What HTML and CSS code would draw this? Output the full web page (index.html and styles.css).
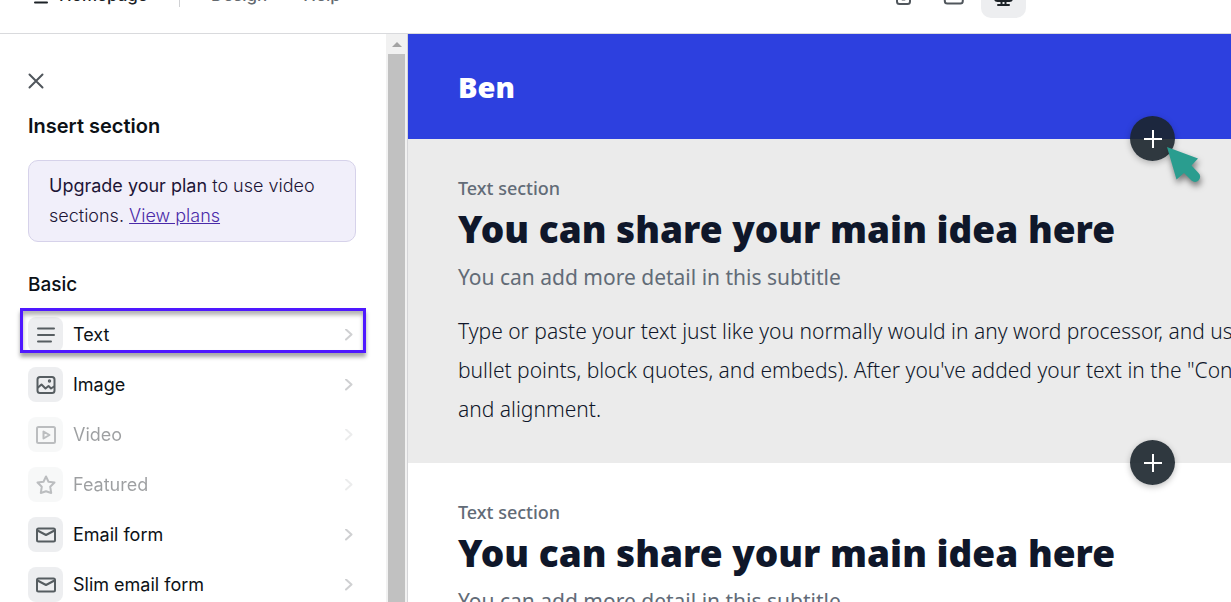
FILE: index.html
```
<!DOCTYPE html>
<html lang="en">
<head>
<meta charset="utf-8">
<title>Page editor</title>
<link rel="stylesheet" href="styles.css">
</head>
<body>
<div class="app">
  <header class="topbar">
    <button class="page-picker" type="button">
      <svg class="menu-icon" viewBox="0 0 14 18"><path d="M1 4h12M1 10h12M1 16.500h12"/></svg>
      <span>Homepage</span>
    </button>
    <span class="divider"></span>
    <nav class="topnav">
      <a href="#design">Design</a>
      <a href="#help">Help</a>
    </nav>
    <div class="devices">
      <button class="device" type="button" aria-label="Phone">
        <svg viewBox="0 0 20 20"><rect x="3" y="1" width="13" height="18" rx="2.500"/><path d="M8.500 14.500h2"/></svg>
      </button>
      <button class="device" type="button" aria-label="Tablet">
        <svg viewBox="0 0 20 20"><rect x=".8" y="2.500" width="18" height="16" rx="2.500"/></svg>
      </button>
      <button class="device device-active" type="button" aria-label="Desktop">
        <svg viewBox="0 0 20 20"><rect x="1" y="1" width="17" height="15" rx="2.500" fill="currentColor"/><path d="M7.500 16v4M11.500 16v4M4 20h11"/></svg>
      </button>
    </div>
  </header>

  <div class="workspace">
    <aside class="panel">
      <button class="close" type="button" aria-label="Close">
        <svg viewBox="0 0 16 16"><path d="M1.500 1.500l13 13M14.500 1.500l-13 13"/></svg>
      </button>
      <h1 class="panel-title">Insert section</h1>
      <p class="notice"><strong>Upgrade your plan</strong> to use video sections. <a href="#plans">View plans</a></p>
      <h2 class="group-title">Basic</h2>
      <div class="options">
        <button class="option option-marked" type="button">
          <span class="tile"><svg viewBox="0 0 20 20"><path d="M2 3.500h16M2 10h16M2 16.500h13"/></svg></span>
          <span class="label">Text</span>
          <svg class="chevron" viewBox="0 0 8 12"><path d="M1 .5l5.500 5L1 10.500"/></svg>
        </button>
        <button class="option" type="button">
          <span class="tile"><svg viewBox="0 0 20 20"><rect x="1.500" y="2" width="17" height="16" rx="2.500"/><path d="M2 12.500l3.500-3 4 4 3-2.500 2.500 2.500 3-2"/><circle cx="13.500" cy="6" r=".7"/></svg></span>
          <span class="label">Image</span>
          <svg class="chevron" viewBox="0 0 8 12"><path d="M1 .5l5.500 5L1 10.500"/></svg>
        </button>
        <button class="option" type="button" disabled>
          <span class="tile"><svg viewBox="0 0 20 20"><rect x="1" y="2" width="18" height="16" rx="1.500"/><path d="M7.500 6.500v7l6-3.500z"/></svg></span>
          <span class="label">Video</span>
          <svg class="chevron" viewBox="0 0 8 12"><path d="M1 .5l5.500 5L1 10.500"/></svg>
        </button>
        <button class="option" type="button" disabled>
          <span class="tile"><svg viewBox="0 0 20 20"><path d="M10 1.500l2.500 5.200 6 .8-4.300 4.200 1 6.300-5.200-1.800L4.800 18l1-6.300L1.500 7.500l6-.8z"/></svg></span>
          <span class="label">Featured</span>
          <svg class="chevron" viewBox="0 0 8 12"><path d="M1 .5l5.500 5L1 10.500"/></svg>
        </button>
        <button class="option" type="button">
          <span class="tile"><svg viewBox="0 0 20 20"><rect x="1" y="3.500" width="18" height="13" rx="1.500"/><path d="M1.500 5.500L10 10l8.500-4.500"/></svg></span>
          <span class="label">Email form</span>
          <svg class="chevron" viewBox="0 0 8 12"><path d="M1 .5l5.500 5L1 10.500"/></svg>
        </button>
        <button class="option" type="button">
          <span class="tile"><svg viewBox="0 0 20 20"><rect x="1" y="3.500" width="18" height="13" rx="1.500"/><path d="M1.500 5.500L10 10l8.500-4.500"/></svg></span>
          <span class="label">Slim email form</span>
          <svg class="chevron" viewBox="0 0 8 12"><path d="M1 .5l5.500 5L1 10.500"/></svg>
        </button>
      </div>
    </aside>
    <div class="scrollbar">
      <svg class="scroll-up" viewBox="0 0 10 5"><path d="M5 0l5 5H0z"/></svg>
      <div class="thumb"></div>
    </div>

    <main class="canvas">
      <div class="site">
        <section class="banner">
          <span class="brand">Ben</span>
          <button class="add" type="button" aria-label="Add section">
            <svg viewBox="0 0 18 18"><path d="M9 0v18M0 9h18"/></svg>
          </button>
          <svg class="pointer" viewBox="0 0 40 44"><path d="M2 3L33 14.500L26.500 21.500L33.500 29A5 5 0 0 1 26.500 36.500L19 29L11.500 35.500z"/></svg>
        </section>
        <section class="block block-gray">
          <p class="eyebrow">Text section</p>
          <h2 class="headline">You can share your main idea here</h2>
          <p class="subtitle">You can add more detail in this subtitle</p>
          <p class="copy">Type or paste your text just like you normally would in any word processor, and use<br>bullet points, block quotes, and embeds). After you've added your text in the "Content<br>and alignment.</p>
          <button class="add" type="button" aria-label="Add section">
            <svg viewBox="0 0 18 18"><path d="M9 0v18M0 9h18"/></svg>
          </button>
        </section>
        <section class="block">
          <p class="eyebrow">Text section</p>
          <h2 class="headline">You can share your main idea here</h2>
          <p class="subtitle">You can add more detail in this subtitle</p>
        </section>
      </div>
    </main>
  </div>
</div>
</body>
</html>
```
FILE: styles.css
```
* {
  box-sizing: border-box;
}

body {
  margin: 0;
  background: #fff;
  color: #0c1116;
  font-family: Inter, "Liberation Sans", sans-serif;
}

h1, h2, p {
  margin: 0;
}

button {
  border: 0;
  padding: 0;
  background: none;
  color: inherit;
  font: inherit;
  text-align: left;
}

svg {
  display: block;
  fill: none;
  stroke: currentColor;
  stroke-width: 2;
  stroke-linecap: round;
  stroke-linejoin: round;
}

.app {
  display: flex;
  flex-direction: column;
  height: 100vh;
  overflow: hidden;
}

/* The bar is scrolled most of the way out of view. */
.topbar {
  display: flex;
  flex: none;
  align-items: center;
  height: 78px;
  margin-top: -44px;
  padding: 0 205px 0 34px;
  border-bottom: 1px solid #d9dadd;
  font-size: 17px;
  line-height: 24px;
}

.page-picker {
  display: flex;
  align-items: center;
  gap: 11px;
  color: #1c2227;
  font-weight: 500;
}

.menu-icon {
  width: 14px;
  height: 18px;
}

.divider {
  width: 1px;
  height: 24px;
  margin: 0 31px;
  background: #d0d1d4;
}

.topnav {
  display: flex;
  gap: 36px;
}

.topnav a {
  color: #656a70;
  font-weight: 500;
  text-decoration: none;
}

.devices {
  display: flex;
  gap: 5px;
  margin-left: auto;
}

.device {
  display: grid;
  place-items: center;
  width: 45px;
  height: 46px;
  border-radius: 10px;
  color: #50565c;
}

.device svg {
  width: 20px;
  height: 20px;
  overflow: visible;
}

.device-active {
  background: #edeef0;
  color: #1c2227;
}

.workspace {
  display: flex;
  flex: 1;
  min-height: 0;
}

.panel {
  flex: none;
  width: 386px;
  padding: 39px 30px 0 28px;
  overflow: hidden;
}

.close {
  display: block;
  color: #50565c;
}

.close svg {
  width: 16px;
  height: 16px;
}

.panel-title {
  margin-top: 25px;
  font-size: 20px;
  font-weight: 600;
  line-height: 24px;
}

.notice {
  margin-top: 22px;
  padding: 10px 20px;
  border: 1px solid #d6d2ea;
  border-radius: 10px;
  background: #f1effa;
  color: #1d1536;
  font-size: 18px;
  font-weight: 300;
  line-height: 30px;
}

.notice strong {
  font-weight: 400;
}

.notice a {
  color: #4a2aa8;
}

.group-title {
  margin-top: 31px;
  font-size: 19px;
  font-weight: 500;
  line-height: 24px;
}

.options {
  display: flex;
  flex-direction: column;
  gap: 15px;
  margin-top: 20px;
}

.option {
  display: flex;
  position: relative;
  align-items: center;
  gap: 10px;
  font-size: 18px;
  line-height: 24px;
}

.option:disabled .tile,
.option:disabled .label,
.option:disabled .chevron {
  opacity: 0.4;
}

.option-marked::after {
  content: "";
  position: absolute;
  inset: -9px -10px -1px -8px;
  border: 3px solid #4f18ff;
  box-shadow: 0 4px 4px rgba(0, 0, 0, 0.35), inset 0 4px 4px rgba(0, 0, 0, 0.3);
}

.tile {
  display: grid;
  flex: none;
  place-items: center;
  width: 35px;
  height: 35px;
  border-radius: 8px;
  background: #edeef0;
  color: #565d61;
}

.tile svg {
  width: 20px;
  height: 20px;
}

.chevron {
  width: 8px;
  height: 12px;
  margin-right: 3px;
  margin-left: auto;
  color: #cfd0d2;
}

.scrollbar {
  display: flex;
  flex: none;
  flex-direction: column;
  align-items: center;
  gap: 7px;
  width: 22px;
  padding-top: 8px;
  border-right: 1px solid #d5d5d8;
  background: #f1f1f1;
}

.scroll-up {
  width: 10px;
  height: 5px;
  fill: #a3a3a3;
  stroke: none;
}

.thumb {
  flex: 1;
  width: 17px;
  background: #c1c1c1;
}

.canvas {
  flex: 1;
  min-width: 0;
  overflow: hidden;
  font-family: "Noto Sans", "Open Sans", sans-serif;
}

/* The previewed site is wider than the space left for it. */
.site {
  width: 181%;
}

.banner {
  display: flex;
  position: relative;
  z-index: 1;
  align-items: center;
  height: 105px;
  padding: 0 50px;
  background: #2d40df;
}

.brand {
  color: #fff;
  font-size: 29px;
  font-weight: 900;
  line-height: 40px;
}

.add {
  display: grid;
  position: absolute;
  bottom: -22px;
  left: 50%;
  place-items: center;
  width: 45px;
  height: 45px;
  margin-left: -23px;
  padding-left: 1px;
  border-radius: 50%;
  background: rgba(27, 37, 44, 0.9);
  box-shadow: 0 2px 6px rgba(0, 0, 0, 0.25);
  color: #fff;
}

.add svg {
  width: 18px;
  height: 18px;
  stroke-linecap: butt;
}

.pointer {
  position: absolute;
  top: 110px;
  left: 50%;
  width: 40px;
  height: 44px;
  margin-left: 12px;
  fill: #2a9d8f;
  stroke: none;
  filter: drop-shadow(1px 4px 3px rgba(0, 0, 0, 0.5));
}

.block {
  position: relative;
  padding: 34px 50px;
}

.block-gray {
  background: #ebebeb;
}

.eyebrow {
  color: #626b77;
  font-size: 18px;
  font-weight: 500;
  line-height: 30px;
}

.headline {
  color: #0f172a;
  font-size: 37px;
  font-weight: 900;
  line-height: 52px;
}

.subtitle {
  color: #626b77;
  font-size: 21px;
  line-height: 44px;
}

.copy {
  margin-top: 13px;
  color: #0f172a;
  font-size: 21px;
  font-weight: 300;
  line-height: 39px;
  white-space: nowrap;
}
```
